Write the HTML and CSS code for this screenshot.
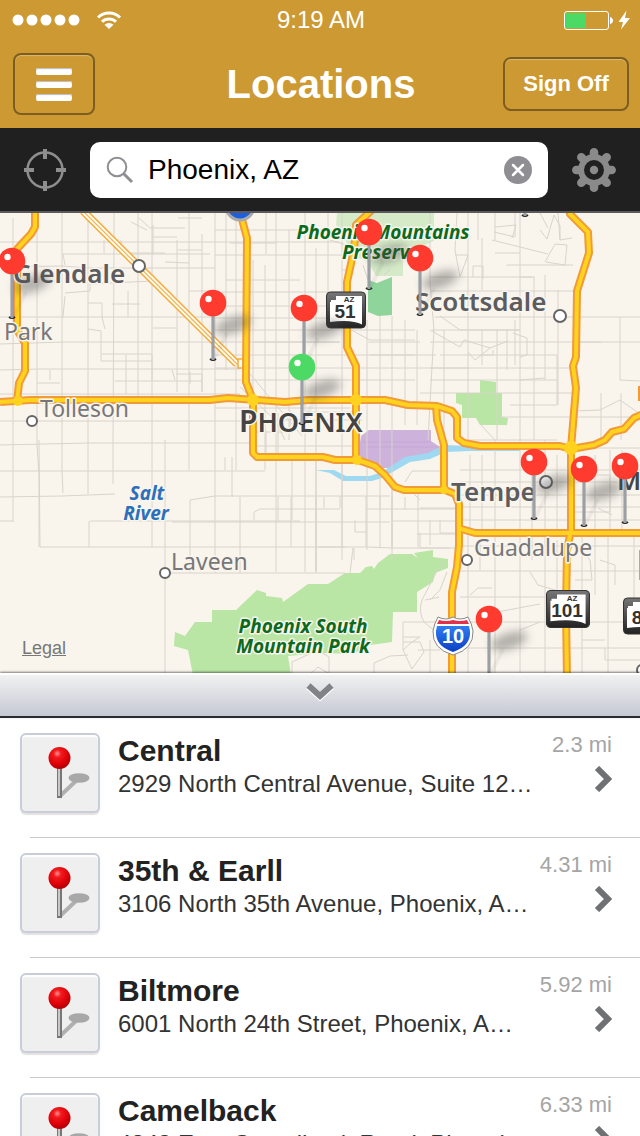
FILE: index.html
```html
<!DOCTYPE html>
<html lang="en">

<head>
    <meta charset="UTF-8">
    <meta name="viewport" content="width=device-width, initial-scale=1.0">
    <title>Locations</title>
    <link rel="stylesheet" href="styles.css">
</head>

<body>
    <div class="app">
        <header class="header">
            <div class="status-bar">
                <div class="status-left">
                    <svg width="68" height="12" viewBox="0 0 68 12" fill="#fff">
                        <circle cx="6" cy="6" r="5.500" />
                        <circle cx="20" cy="6" r="5.500" />
                        <circle cx="34" cy="6" r="5.500" />
                        <circle cx="48" cy="6" r="5.500" />
                        <circle cx="62" cy="6" r="5.500" />
                    </svg>
                    <svg width="26" height="20" viewBox="0 0 26 20" fill="none" stroke="#fff" stroke-width="3">
                        <path d="M2 7.500a16 16 0 0 1 22 0" />
                        <path d="M6 11.800a10 10 0 0 1 14 0" />
                        <path d="M13 19l-4.500-4.300a6.500 6.500 0 0 1 9 0z" fill="#fff" stroke="none" />
                    </svg>
                </div>
                <span class="time">9:19 AM</span>
                <div class="status-right">
                    <svg width="66" height="20" viewBox="0 0 66 20">
                        <rect x="0.500" y="1.500" width="44" height="18" rx="2.500" fill="none" stroke="#fff" />
                        <rect x="2" y="3" width="20" height="15" fill="#4cd964" />
                        <path d="M46 7q3 1 3 3.500t-3 3.500z" fill="#fff" />
                        <path d="M62.500 0.500L54.500 12h4.500l-2 7.500L66 8h-5z" fill="#fff" />
                    </svg>
                </div>
            </div>
            <div class="nav-bar">
                <div class="nav-left">
                    <button class="nav-button menu-button" aria-label="Menu">
                        <span class="menu-line"></span>
                        <span class="menu-line"></span>
                        <span class="menu-line"></span>
                    </button>
                </div>
                <h1 class="title">Locations</h1>
                <div class="nav-right">
                    <button class="nav-button sign-off">Sign Off</button>
                </div>
            </div>
        </header>

        <form class="search-bar">
            <button type="button" class="icon-button" aria-label="Current location">
                <svg width="42" height="42" viewBox="0 0 42 42" fill="none" stroke="#8e8e8e">
                    <circle cx="21" cy="21" r="17.500" stroke-width="2.500" />
                    <path d="M21 0v10M21 32v10M0 21h10M32 21h10" stroke-width="4" />
                </svg>
            </button>
            <div class="search-box">
                <svg class="search-icon" width="28" height="28" viewBox="0 0 28 28" fill="none" stroke="#8e8e93">
                    <circle cx="11" cy="11" r="9.300" stroke-width="2" />
                    <path d="M17.500 17.500l8.500 8.500" stroke-width="3" />
                </svg>
                <input type="text" class="search-input" aria-label="Search location" value="Phoenix, AZ">
                <button type="button" class="clear-button" aria-label="Clear">
                    <svg width="28" height="28" viewBox="0 0 28 28">
                        <circle cx="14" cy="14" r="14" fill="#8e8e93" />
                        <path d="M9 9l10 10M19 9L9 19" stroke="#fff" stroke-width="2.500" stroke-linecap="round" />
                    </svg>
                </button>
            </div>
            <button type="button" class="icon-button" aria-label="Settings">
                <svg width="44" height="44" viewBox="0 0 44 44">
                    <g stroke="#8a8a8a" stroke-width="8.500" stroke-linecap="round">
                        <path d="M22 4.300v35.400M4.300 22h35.400M9.300 9.300l25.400 25.400M34.700 9.300L9.300 34.700" />
                    </g>
                    <circle cx="22" cy="22" r="16" fill="#8a8a8a" />
                    <circle cx="22" cy="22" r="10" fill="#202020" />
                    <circle cx="22" cy="22" r="4.200" fill="#8a8a8a" />
                </svg>
            </button>
        </form>

        <div class="map">
            <svg class="map-canvas" viewBox="0 213 640 460" preserveAspectRatio="xMidYMid slice">
                <defs>
                    <filter id="blur" x="-50%" y="-80%" width="200%" height="260%">
                        <feGaussianBlur stdDeviation="5" />
                    </filter>
                    <linearGradient id="shield-blue" x1="0" y1="0" x2="0" y2="1">
                        <stop offset="0" stop-color="#2f7df0" />
                        <stop offset="1" stop-color="#0b3fc4" />
                    </linearGradient>
                    <linearGradient id="shield-dark" x1="0" y1="0" x2="0" y2="1">
                        <stop offset="0" stop-color="#777" />
                        <stop offset="1" stop-color="#222" />
                    </linearGradient>
                    <g id="pin-shadow">
                        <ellipse cx="20" cy="22" rx="19" ry="8" fill="#444" opacity="0.4" transform="rotate(-18 20 22)" filter="url(#blur)" />
                        <path d="M1 56L14 30" stroke="#444" stroke-width="4" opacity="0.06" />
                    </g>
                    <g id="pin-stem">
                        <path d="M-3 56q3 2 6 0" fill="none" stroke="#222" stroke-width="2" />
                        <path d="M0 10v47" stroke="#8b8e94" stroke-width="3" />
                        <path d="M0 10v47" stroke="#adb0b6" stroke-width="1" />
                    </g>
                    <g id="pin-red">
                        <use href="#pin-stem" />
                        <circle r="13.300" fill="#ff3b30" />
                        <circle cx="-4.500" cy="-4" r="3.200" fill="#fff" />
                    </g>
                    <g id="pin-green">
                        <use href="#pin-stem" />
                        <circle r="13.300" fill="#4cd964" />
                        <circle cx="-4.500" cy="-4" r="3.200" fill="#fff" />
                    </g>
                    <!-- state route sign -->
                    <g id="route-sign">
                        <rect x="-19.500" y="-18" width="39" height="36" rx="4" fill="url(#shield-dark)" stroke="#333" />
                        <path d="M-10 -14H16V14.500Q6 9 -16 12V-8H-15V-10H-10z" fill="#fff" />
                    </g>
                </defs>

                <rect y="200" width="640" height="490" fill="#f9f5ed" />

                <!-- parks, airport, water -->
                <path class="park-light" d="M337 213H434V241L422 246L403 250V276H376L368 262L350 254L344 235L336 225z" />
                <path class="park-deep" d="M368 280L377 283L392 277V315L378 316L368 312z" />
                <path class="park" d="M456 393H480V380L496 382V393H502V417L508 418L507 425H480L476 418H462V405L456 403z" />
                <path class="park" d="M175 632L185 636L195 622H212V610H236L257 590L266 593V596L282 598L283 602L308 584H328L345 573H360L366 567L372 566L374 569L378 563L390 554H412L418 558L414 553L433 550V557L448 559V568L435 573L433 582L417 592V612H393L392 642L370 645L353 654L323 653L288 656L291 675H193L188 650L174 646z" />
                <path class="airport" d="M361 436L369 430H431V441L440 447L428 455L408 457L391 468H368L358 455z" />
                <path d="M362 442H431M366 447H440" stroke="#c5a6d3" fill="none" />
                <path class="water" d="M316 470H334L346 476H370L382 472L405 457L428 453L444 445L470 446H520V451H470L446 452L430 459L410 462L382 478L372 481H343L330 473z" />

                <!-- local streets -->
                <path class="street" d="M13 218V522M37 213V445L39 475V547M62 213V470L63 493M88 213V494M104 240V253M114 213V250L113 440V484M121 240V252M138 213V398M152 213V547M165 440V673M177 240V392M189 213V470M202 234V392M215 213V440M215 440V573M236 213V470M265 265V470M276 213V572M305 213V572M316 248V571M328 213V310M342 213V560M367 320V550M380 316V548M392 316V548M405 320V425M417 330V425M39 440L40 547H345" />
                <path class="street" d="M0 242H340M0 267L63 266L88 268H215M62 254H210M65 293L90 291V284L152 281M0 317H215M0 344L65 342H340M0 370L40 369H240M0 394H240M0 421H250M0 445L90 443H253M0 471H265M0 497L62 496L115 494M90 521H300M89 521V547M172 522H390M165 573H345M190 573V500L215 496H390M0 521H13" />
                <path class="street" d="M63 254L65 265M65 296L63 317M88 303H102V317L105 329M88 329L101 331V361H152M112 304H140M128 291V317M139 218L150 228H185M131 222L147 230M130 253H165M153 225V255M153 237H177M165 262L189 263M178 218H202M178 250H202M189 291H215M153 328H177M102 354H152V380M126 355V394M115 381H202M37 383H60M50 370V380M172 370L175 380M176 374H202V392M190 372V384" />
                <path class="street" d="M215 230H340M215 255H342M215 292H342M215 306H342M215 318H342M215 330H415M215 355H415M215 368H470M215 380H415M215 408H350M226 213V370M253 260V390M266 213V254M289 230V440M226 280H300M230 243H276M253 342H340M240 387L275 420L285 440M250 374L302 436M342 325L370 340H415M368 342H420M370 355H436M342 270H350M350 300H362M330 240L350 246M363 265L368 280M384 275L390 270" />
                <path class="street" d="M253 420H362M253 432H290V410M305 412H360M266 430V455M278 413V456M292 456V520M316 456V572M342 462V547M253 446H355M232 457V497M225 457V470M240 497V573M254 520V512L260 509H340M278 497V521M291 497V547M316 497V573M340 496V508M366 496V547M392 490V560M405 482L412 471H440M354 548V560M324 497V508M355 520V532H367M380 496V508M392 496V547M405 497V509M418 490V547M392 521H460M367 509H460M417 534H460M318 547H368L392 548H460M353 548L350 573" />
                <path class="street" d="M430 213V283L434 330L428 440M444 330V440M468 213V440M457 213L455 250L460 277M482 238V290M495 213V240M494 232L515 237V213M455 255H468L460 277M478 240V213M495 227L516 225L512 238M520 213V440M495 253H520M492 240L548 254M534 277V440M545 275V380M520 277H532M473 277V266H483V279M558 290V405M573 265H507V266M545 262L555 244L567 245L565 265L546 262M558 213L560 240M540 230L547 239L554 215L560 226V240L572 238M540 213L548 228" />
                <path class="street" d="M430 277H535M430 291H573M435 317H640M432 330H520M430 342H640M440 355H557V405M430 368H573M430 380H557M420 393H573M430 330L460 347L464 340L490 348L508 341M440 316L460 330H520M468 352L475 360L490 348M482 330V365M497 330V440M507 330V370M513 333L527 338V355L520 357M515 320V365M480 355H493V350M520 380L545 378M510 405H557M500 417H573M495 440L480 424" />
                <path class="street" d="M620 317V380L640 381M601 342H573M621 393V440M573 411L600 410L620 400L640 414M573 417H640M601 393V440" />
                <path class="street" d="M470 455V530M482 455V530M495 440V533M520 440V533M532 450V530M545 440V530M557 455V530M595 455V530M610 450V530M622 450V530M460 470H640M460 482H640M460 495H640M460 507H640M460 520H640M469 440H557M583 448H640M588 475H610V488M575 512H610V500M598 508L612 515" />
                <path class="street" d="M468 533V673M480 540V570M495 533V673M520 533V673M532 533V560M545 533V673M557 540V600M582 533V673M595 533V595M608 533V673M634 533V600M460 546H640M460 571H640M460 597H552M460 622H640M460 648H640M470 595L478 588H492M497 612L540 604M520 630L540 622M530 572L538 585L555 590M575 545L590 560L592 580H575M600 560L615 565V585M605 648V660H640M582 640H605" />
                <path class="street" d="M444 560L436 573L422 600Q418 612 424 622L436 632M430 600L440 590L447 572M403 637H420L412 642L403 650V637M403 650L412 669L424 652L420 642H403M374 674V663L390 656L408 655M292 674V662L318 650L329 657V674M310 674L318 667L328 673M403 637V622H440M418 650H440M430 640V673M439 597L425 600M420 500L410 490M420 508H455M430 520V545M440 520V533H455M420 533V548H450" />

                <!-- Grand Avenue -->
                <path d="M83 211L237 364" stroke="#f5ab3a" stroke-width="8" fill="none" />
                <path d="M83 211L237 364" stroke="#fffdf5" stroke-width="5" fill="none" />
                <path d="M83 211L237 364" stroke="#f5b44e" stroke-width="1.200" fill="none" />
                <path d="M238 359h5v9h-5z" fill="#fffdf5" stroke="#f5ab3a" stroke-width="1.500" />

                <!-- freeways -->
                <g class="road-edge">
                    <path id="r1" d="M35 205V227L31 234L17 249V330L25 343V371L19 383L17 402M0 402L30 400L210 400L228 398L285 402L308 400H385L408 405L437 406L452 411L457 417V438L464 443L480 446L560 446L571 449L594 445L605 440L612 432L624 429L634 418L645 413" />
                    <path id="r2" d="M240 212L247 238L246 382L253 400V453L257 457H323L335 460H358L375 466L385 475L395 487L404 490H445L455 494L459 504V545L457 567L452 592V680" />
                    <path id="r3" d="M374 208L356 225L354 250L347 282V347L356 366V460" />
                    <path id="r4" d="M568 205L570 214L588 232L589 253L577 291L576 357L573 366L576 388L571 448V530L567 550L566 610L567 680" />
                    <path id="r5" d="M458 528L475 533H645" />
                    <path id="r6" d="M436 404L437 420L444 445V490" />
                    <path id="r7" d="M642 386V401M643 550V580" />
                </g>
                <g class="road">
                    <use href="#r1" />
                    <use href="#r2" />
                    <use href="#r3" />
                    <use href="#r4" />
                    <use href="#r5" />
                    <use href="#r6" />
                    <use href="#r7" />
                </g>
                <g fill="#ffd21e">
                    <circle cx="18" cy="401" r="5" />
                    <circle cx="253" cy="400" r="6" />
                    <circle cx="356" cy="400" r="6" />
                    <circle cx="571" cy="448" r="7" />
                    <circle cx="357" cy="460" r="5" />
                    <circle cx="444" cy="490" r="4" />
                </g>

                <!-- shields -->
                <g>
                    <circle cx="240" cy="206" r="14" fill="#1d5fdc" stroke="#aaa" stroke-width="3" />
                    <path d="M453 655Q432 649 433 631Q434 624 438 617Q446 621 453 617Q460 621 468 617Q472 624 473 631Q474 649 453 655z" fill="#fff" stroke="#888" />
                    <path d="M453 652Q435 646 436 631L437 626H469L470 631Q471 646 453 652z" fill="url(#shield-blue)" />
                    <path d="M437 624L439 620Q446 622 453 620Q460 622 467 620L469 624z" fill="#e0324b" />
                    <text class="shield-text" x="453" y="643">10</text>
                    <use href="#route-sign" x="346" y="310" />
                    <text class="az" x="349" y="302">AZ</text>
                    <text class="route" x="345" y="318">51</text>
                    <use href="#route-sign" transform="translate(568 609) scale(1.1 1.03)" />
                    <text class="az" x="572" y="601">AZ</text>
                    <text class="route" x="567" y="617">101</text>
                    <use href="#route-sign" x="643" y="616" />
                    <text class="route" x="637" y="624">8</text>
                </g>

                <!-- town markers -->
                <g class="town">
                    <circle cx="139" cy="266" r="6" />
                    <circle cx="32" cy="421" r="5" />
                    <circle cx="560" cy="316" r="6" />
                    <circle cx="165" cy="573" r="5" />
                    <circle cx="467" cy="560" r="5" />
                    <circle cx="546" cy="482" r="6" />
                    <circle cx="642" cy="670" r="5" />
                </g>

                <!-- labels -->
                <g class="label">
                    <text class="city" x="13" y="283">Glendale</text>
                    <text class="city" x="415" y="311">Scottsdale</text>
                    <text class="city" x="451" y="501">Tempe</text>
                    <text class="city dark" x="617" y="490">Mesa</text>
                    <text class="capital" x="239" y="432">P<tspan class="small">HOENIX</tspan></text>
                    <text class="suburb" x="4" y="340">Park</text>
                    <text class="suburb" x="40" y="417">Tolleson</text>
                    <text class="suburb" x="171" y="570">Laveen</text>
                    <text class="suburb" x="474" y="556">Guadalupe</text>
                    <text class="park-name" x="383" y="239">Phoenix Mountains</text>
                    <text class="park-name" x="381" y="259">Preserve</text>
                    <text class="park-name" x="303" y="633">Phoenix South</text>
                    <text class="park-name" x="303" y="653">Mountain Park</text>
                    <text class="water-name" x="147" y="500">Salt</text>
                    <text class="water-name" x="146" y="520">River</text>
                </g>

                <!-- pins -->
                <use href="#pin-shadow" x="12" y="262" />
                <use href="#pin-shadow" x="213" y="303" />
                <use href="#pin-shadow" x="304" y="308" />
                <use href="#pin-shadow" x="302" y="367" />
                <use href="#pin-shadow" x="369" y="232" />
                <use href="#pin-shadow" x="420" y="258" />
                <use href="#pin-shadow" x="534" y="462" />
                <use href="#pin-shadow" x="584" y="469" />
                <use href="#pin-shadow" x="489" y="619" />
                <use href="#pin-red" x="525" y="159" />
                <use href="#pin-red" x="12" y="261" />
                <use href="#pin-red" x="213" y="303" />
                <use href="#pin-red" x="304" y="308" />
                <use href="#pin-green" x="302" y="367" />
                <use href="#pin-red" x="369" y="232" />
                <use href="#pin-red" x="420" y="258" />
                <use href="#pin-red" x="534" y="462" />
                <use href="#pin-red" x="584" y="469" />
                <use href="#pin-red" x="625" y="466" />
                <use href="#pin-red" x="489" y="619" />
            </svg>
            <a href="#" class="legal">Legal</a>
        </div>

        <button class="drawer-handle" aria-label="Hide list">
            <svg width="28" height="20" viewBox="0 0 28 20" fill="none" stroke-width="6">
                <path d="M2.500 5L14 15.500L25.500 5" stroke="#fff" />
                <path d="M2.500 3.500L14 14L25.500 3.500" stroke="#808388" />
            </svg>
        </button>

        <!-- pin picture shared by the rows -->
        <svg class="hidden-defs" width="0" height="0">
            <defs>
                <radialGradient id="ball" cx="0.400" cy="0.300" r="0.700">
                    <stop offset="0" stop-color="#ff8f8f" />
                    <stop offset="0.250" stop-color="#f01a1e" />
                    <stop offset="0.700" stop-color="#dd0008" />
                    <stop offset="1" stop-color="#b00005" />
                </radialGradient>
                <symbol id="row-pin" viewBox="2 2 76 76">
                    <path d="M40 63L57 47" stroke="#b0b0b0" stroke-width="4" />
                    <ellipse cx="59" cy="45" rx="10.500" ry="4.800" fill="#a8a8a8" />
                    <path d="M39.500 32v33" stroke="#777" stroke-width="5" />
                    <path d="M39 32v31" stroke="#c8c8c8" stroke-width="2" />
                    <circle cx="39.500" cy="25" r="11" fill="url(#ball)" />
                </symbol>
            </defs>
        </svg>

        <ul class="list">
            <li>
                <a href="#" class="row">
                    <span class="thumb"><svg viewBox="0 0 76 76"><use href="#row-pin" /></svg></span>
                    <span class="info">
                        <span class="name">Central</span>
                        <span class="address">2929 North Central Avenue, Suite 12…</span>
                    </span>
                    <span class="side">
                        <span class="distance">2.3 mi</span>
                        <svg class="chevron" width="18" height="26" viewBox="0 0 18 26"><path d="M3 2L14 13L3 24" /></svg>
                    </span>
                </a>
            </li>
            <li>
                <a href="#" class="row">
                    <span class="thumb"><svg viewBox="0 0 76 76"><use href="#row-pin" /></svg></span>
                    <span class="info">
                        <span class="name">35th &amp; Earll</span>
                        <span class="address">3106 North 35th Avenue, Phoenix, A…</span>
                    </span>
                    <span class="side">
                        <span class="distance">4.31 mi</span>
                        <svg class="chevron" width="18" height="26" viewBox="0 0 18 26"><path d="M3 2L14 13L3 24" /></svg>
                    </span>
                </a>
            </li>
            <li>
                <a href="#" class="row">
                    <span class="thumb"><svg viewBox="0 0 76 76"><use href="#row-pin" /></svg></span>
                    <span class="info">
                        <span class="name">Biltmore</span>
                        <span class="address">6001 North 24th Street, Phoenix, A…</span>
                    </span>
                    <span class="side">
                        <span class="distance">5.92 mi</span>
                        <svg class="chevron" width="18" height="26" viewBox="0 0 18 26"><path d="M3 2L14 13L3 24" /></svg>
                    </span>
                </a>
            </li>
            <li>
                <a href="#" class="row">
                    <span class="thumb"><svg viewBox="0 0 76 76"><use href="#row-pin" /></svg></span>
                    <span class="info">
                        <span class="name">Camelback</span>
                        <span class="address">4343 East Camelback Road, Phoeni…</span>
                    </span>
                    <span class="side">
                        <span class="distance">6.33 mi</span>
                        <svg class="chevron" width="18" height="26" viewBox="0 0 18 26"><path d="M3 2L14 13L3 24" /></svg>
                    </span>
                </a>
            </li>
        </ul>
    </div>
</body>

</html>
```
FILE: styles.css
```css
/* styles.css */

* {
    box-sizing: border-box;
}

body {
    margin: 0;
    font-family: "Liberation Sans", Arial, sans-serif;
    background-color: #fff;
}

button {
    padding: 0;
    border: none;
    background: none;
    font-family: inherit;
    cursor: pointer;
}

svg {
    display: block;
}

.app {
    display: flex;
    flex-direction: column;
    height: 100vh;
    overflow: hidden;
}

/* header */

.header {
    flex: none;
    background-color: #cc9933;
    color: #fff;
    padding-bottom: 12px;
}

.status-bar {
    display: grid;
    grid-template-columns: 1fr auto 1fr;
    align-items: center;
    height: 40px;
    padding: 0 10px 0 12px;
}

.status-left {
    display: flex;
    align-items: center;
    gap: 16px;
}

.status-right {
    display: flex;
    justify-content: flex-end;
}

.time {
    font-size: 24px;
}

.nav-bar {
    display: grid;
    grid-template-columns: 1fr auto 1fr;
    align-items: center;
    height: 76px;
    padding: 12px 11px 0 13px;
    align-content: start;
}

.nav-right {
    display: flex;
    justify-content: flex-end;
}

.title {
    margin: 0;
    font-size: 40px;
    font-weight: bold;
    line-height: 64px;
}

.nav-button {
    border: 2px solid #7d5e20;
    border-radius: 8px;
    box-shadow: inset 0 1px 1px rgba(255, 255, 255, 0.3);
    color: #fff;
}

.menu-button {
    display: flex;
    flex-direction: column;
    align-items: center;
    justify-content: center;
    gap: 6px;
    width: 82px;
    height: 62px;
}

.menu-line {
    width: 36px;
    height: 7px;
    border-radius: 2px;
    background-color: #fff;
    box-shadow: inset 0 1px 1px #bbb;
}

.sign-off {
    width: 126px;
    height: 54px;
    font-size: 22px;
    font-weight: bold;
}

/* search */

.search-bar {
    flex: none;
    display: flex;
    align-items: center;
    gap: 24px;
    height: 85px;
    padding: 0 24px;
    background-color: #202020;
    border-bottom: 2px solid #5a5a5c;
}

.search-box {
    flex: 1;
    min-width: 0;
    display: flex;
    align-items: center;
    height: 56px;
    padding: 0 16px;
    border-radius: 10px;
    background-color: #fff;
}

.search-input {
    flex: 1;
    min-width: 0;
    padding: 0 14px;
    border: none;
    outline: none;
    background: none;
    font-family: inherit;
    font-size: 28px;
    color: #000;
}

/* map */

.map {
    flex: none;
    position: relative;
}

.map-canvas {
    width: 100%;
    height: 460px;
}

.park {
    fill: #b9e5a5;
}

.park-light {
    fill: #d5ebc8;
}

.park-deep {
    fill: #8fd49b;
}

.airport {
    fill: #cdb3dc;
}

.water {
    fill: #9ed8f1;
}

.street {
    fill: none;
    stroke: #d8d4cc;
    stroke-width: 1;
}

.road-edge path,
.road {
    fill: none;
    stroke-linejoin: round;
}

.road-edge {
    stroke: #f29a38;
    stroke-width: 8;
}

.road use {
    stroke: #ffd21e;
    stroke-width: 4;
}

.town {
    fill: #fff;
    stroke: #666;
    stroke-width: 2;
}

.label text {
    font-family: "Noto Sans", sans-serif;
    paint-order: stroke;
    stroke: #f9f5ed;
    stroke-width: 3px;
    stroke-linejoin: round;
}

.label .city {
    font-size: 26px;
    font-weight: 600;
    fill: #5c5c5e;
}

.label .dark {
    fill: #444;
}

.label .capital {
    font-size: 30px;
    font-weight: 600;
    fill: #444;
}

.label .small {
    font-size: 27px;
}

.label .suburb {
    font-size: 23px;
    fill: #77777a;
}

.label .park-name,
.label .water-name {
    font-family: "Open Sans", sans-serif;
    font-size: 19px;
    font-weight: bold;
    font-style: italic;
    text-anchor: middle;
}

.label .park-name {
    fill: #0b6a1c;
}

.label .water-name {
    fill: #2d6fba;
}

.shield-text,
.route,
.az {
    font-family: "Liberation Sans", Arial, sans-serif;
    font-weight: bold;
    text-anchor: middle;
}

.shield-text {
    font-size: 20px;
    fill: #fff;
}

.route {
    font-size: 19px;
    fill: #333;
}

.az {
    font-size: 8px;
    fill: #333;
}

.legal {
    position: absolute;
    left: 22px;
    bottom: 14px;
    font-size: 18px;
    color: #777;
}

/* drawer */

.drawer-handle {
    flex: none;
    display: flex;
    justify-content: center;
    align-items: center;
    height: 45px;
    padding-bottom: 6px;
    background-image: linear-gradient(#f3f3f3, #c5c9d3);
    border-bottom: 2px solid #2c2c2e;
    box-shadow: 0 -1px 2px rgba(0, 0, 0, 0.5), inset 0 2px 0 #fff;
    position: relative;
}

.hidden-defs {
    position: absolute;
}

.list {
    flex: 1;
    min-height: 0;
    margin: 0;
    padding: 0;
    list-style: none;
    overflow-y: auto;
    scrollbar-width: none;
}

.list li {
    height: 120px;
}

.row {
    display: flex;
    gap: 18px;
    height: 120px;
    padding: 15px 28px 0 20px;
    background: linear-gradient(#c8c8c8, #c8c8c8) 30px 100% / 100% 1px no-repeat;
    color: #222;
    text-decoration: none;
}

.thumb {
    flex: none;
    width: 80px;
    height: 80px;
    border: 2px solid #c9cdda;
    border-radius: 6px;
    background-color: #efefef;
    box-shadow: 0 2px 1px #e2e2e2, inset 0 2px 1px #fff;
}

.info {
    flex: 1;
    min-width: 0;
}

.name,
.address {
    display: block;
    white-space: nowrap;
}

.name {
    font-size: 30px;
    font-weight: bold;
    line-height: 35px;
}

.address {
    font-size: 24px;
    line-height: 32px;
    color: #333;
}

.side {
    flex: none;
    display: flex;
    flex-direction: column;
    align-items: flex-end;
    gap: 9px;
}

.distance {
    font-size: 22px;
    line-height: 24px;
    color: #a5a5a5;
}

.chevron {
    fill: none;
    stroke: #707173;
    stroke-width: 6;
}
```
